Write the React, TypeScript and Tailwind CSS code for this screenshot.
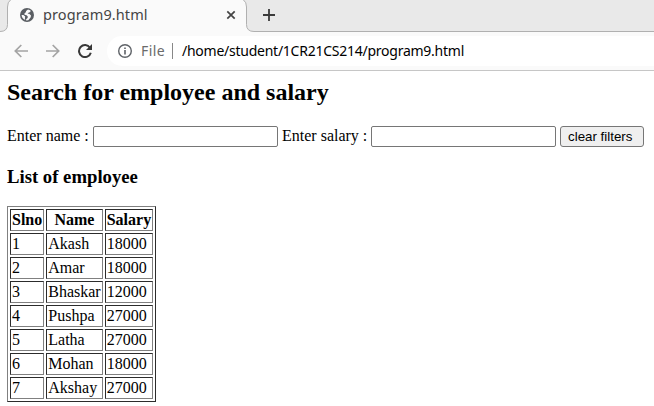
import React from "react";

const employees = [
  { id: 1, name: "Akash", salary: 18000 },
  { id: 2, name: "Amar", salary: 18000 },
  { id: 3, name: "Bhaskar", salary: 12000 },
  { id: 4, name: "Pushpa", salary: 27000 },
  { id: 5, name: "Latha", salary: 27000 },
  { id: 6, name: "Mohan", salary: 18000 },
  { id: 7, name: "Akshay", salary: 27000 },
];

const cell =
  "border border-t-[#2c2c2c] border-l-[#2c2c2c] border-r-[#808080] border-b-[#808080] p-px leading-[18px]";

function TabEdge({ flip = false }: { flip?: boolean }) {
  return (
    <svg width="12" height="32" viewBox="0 0 12 32" className={flip ? "shrink-0 -scale-x-100" : "shrink-0"}>
      <path d="M0 0H10.5Q7.5 2 7.5 7V24.5Q7.5 31.5 0 31.5Z" fill="#e9e9e9" />
      <path d="M10.5 0Q7.5 2 7.5 7V24.5Q7.5 31.5 0 31.5" fill="none" stroke="#b0b0b0" />
    </svg>
  );
}

function TabStrip() {
  return (
    <div className="flex h-8 bg-[#fafafa]">
      <TabEdge />
      <div className="flex h-8 w-[230px] shrink-0 items-center pr-[6px] pl-2">
        <svg width="14" height="14" viewBox="0 0 14 14" className="mt-[-2px] shrink-0">
          <circle cx="7" cy="7" r="7" fill="#5a5e63" />
          <path
            d="M8 1.6 10.6 2.6 10.3 4 8.4 4.8 7.6 5.7H9.2L11 7.4 10.7 9.3 8.3 12.2 6.2 12.4 6.1 11.3 7.6 10 7.8 8.5 6.6 7.3 4.5 6.8 4.4 5.4 5.8 4.3 6.1 2.9ZM1.6 7H3.4L5.2 8.6 4.9 10 5.2 11.9C3 11.1 1.6 9.3 1.6 7Z"
            fill="#fafafa"
          />
        </svg>
        <span className="mt-[-4px] ml-[9px] w-[150px] text-[14.5px] leading-5 tracking-[0.1px] text-[#454545]">program9.html</span>
        <svg width="10" height="10" viewBox="0 0 10 10" className="mt-[-2px] ml-auto shrink-0">
          <path d="M1.3 1.3 8.7 8.7M8.7 1.3 1.3 8.7" stroke="#444" strokeWidth="1.7" />
        </svg>
      </div>
      <TabEdge flip />
      <div className="flex h-8 grow border-b border-[#b0b0b0] bg-[#e9e9e9] pt-[9px] pl-[9px]">
        <svg width="12" height="12" viewBox="0 0 12 12">
          <path d="M6 0V12M0 6H12" stroke="#3b3b3b" strokeWidth="1.8" />
        </svg>
      </div>
    </div>
  );
}

function Toolbar() {
  return (
    <div className="flex h-[39px] items-start border-b border-[#c6c6c6] bg-[#fafafa] pt-1 pl-[14px]">
      <div className="flex h-[30px] w-[93px] shrink-0 items-center gap-[18px]">
        <svg width="14" height="14" viewBox="0 0 14 14" fill="none" stroke="#a4a4a4" strokeWidth="1.7">
          <path d="M14 7H1.5M7.3 1 1.3 7 7.3 13" />
        </svg>
        <svg width="14" height="14" viewBox="0 0 14 14" fill="none" stroke="#a4a4a4" strokeWidth="1.7">
          <path d="M0 7H12.5M6.7 1 12.7 7 6.7 13" />
        </svg>
        <svg width="14" height="14" viewBox="0 0 14 14" fill="none">
          <path d="M12 3.7A6 6 0 1 0 12.8 8.7" stroke="#383838" strokeWidth="2" />
          <path d="M14 0V6H8Z" fill="#383838" />
        </svg>
      </div>
      <div className="flex h-[30px] grow items-center rounded-l-full bg-white pl-[11px] text-[14px] leading-5">
        <svg width="14" height="14" viewBox="0 0 14 14" fill="none" className="shrink-0">
          <circle cx="7" cy="7" r="6.3" stroke="#5f6368" strokeWidth="1.4" />
          <path d="M7 6V10.5M7 3.5V5" stroke="#5f6368" strokeWidth="1.6" />
        </svg>
        <span className="ml-[9px] w-[31px] tracking-[0.4px] text-[#6b6b6b]">File</span>
        <span className="mr-[9px] h-4 w-px bg-[#888]" />
        <span className="whitespace-nowrap tracking-[-0.25px] text-black">/home/student/1CR21CS214/program9.html</span>
      </div>
    </div>
  );
}

export default function App() {
  return (
    <div className="h-[406px] w-[654px] overflow-hidden bg-white font-['Liberation_Serif',serif] text-[16px] text-black">
      <div className="font-['Noto_Sans',sans-serif]">
        <TabStrip />
        <Toolbar />
      </div>
      <main className="pl-[7px]">
        <h2 className="mt-2 h-[27px] text-[24px] leading-[27px] font-bold">Search for employee and salary</h2>
        <div className="mt-5 flex h-[21px] items-center whitespace-nowrap">
          <label className="flex w-[275px] items-center justify-between">
            <span className="pb-0.5 leading-[18px]">Enter name :</span>
            <input className="mr-1 h-[21px] w-[185px] rounded-[2px] border border-[#767676] bg-white" />
          </label>
          <label className="flex items-center">
            <span className="w-[89px] pb-0.5 leading-[18px]">Enter salary :</span>
            <input className="mr-1 h-[21px] w-[185px] rounded-[2px] border border-[#767676] bg-white" />
          </label>
          <button className="h-[21px] w-[84px] rounded-[3px] border border-[#767676] bg-[#efefef] pl-[7px] text-left font-['Liberation_Sans',sans-serif] text-[13.333px] leading-[19px]">clear filters</button>
        </div>
        <h3 className="mt-[19px] h-[21px] text-[18.72px] leading-[21px] font-bold">List of employee</h3>
        <table className="mt-[19px] border-separate border-spacing-[2px] border border-t-[#808080] border-r-[#2c2c2c] border-b-[#2c2c2c] border-l-[#808080] text-left">
          <thead>
            <tr>
              <th className={cell}>Slno</th>
              <th className={`${cell} text-center`}>Name</th>
              <th className={cell}>Salary</th>
            </tr>
          </thead>
          <tbody>
            {employees.map((e) => (
              <tr key={e.id}>
                <td className={cell}>{e.id}</td>
                <td className={cell}>{e.name}</td>
                <td className={cell}>{e.salary}</td>
              </tr>
            ))}
          </tbody>
        </table>
      </main>
    </div>
  );
}
